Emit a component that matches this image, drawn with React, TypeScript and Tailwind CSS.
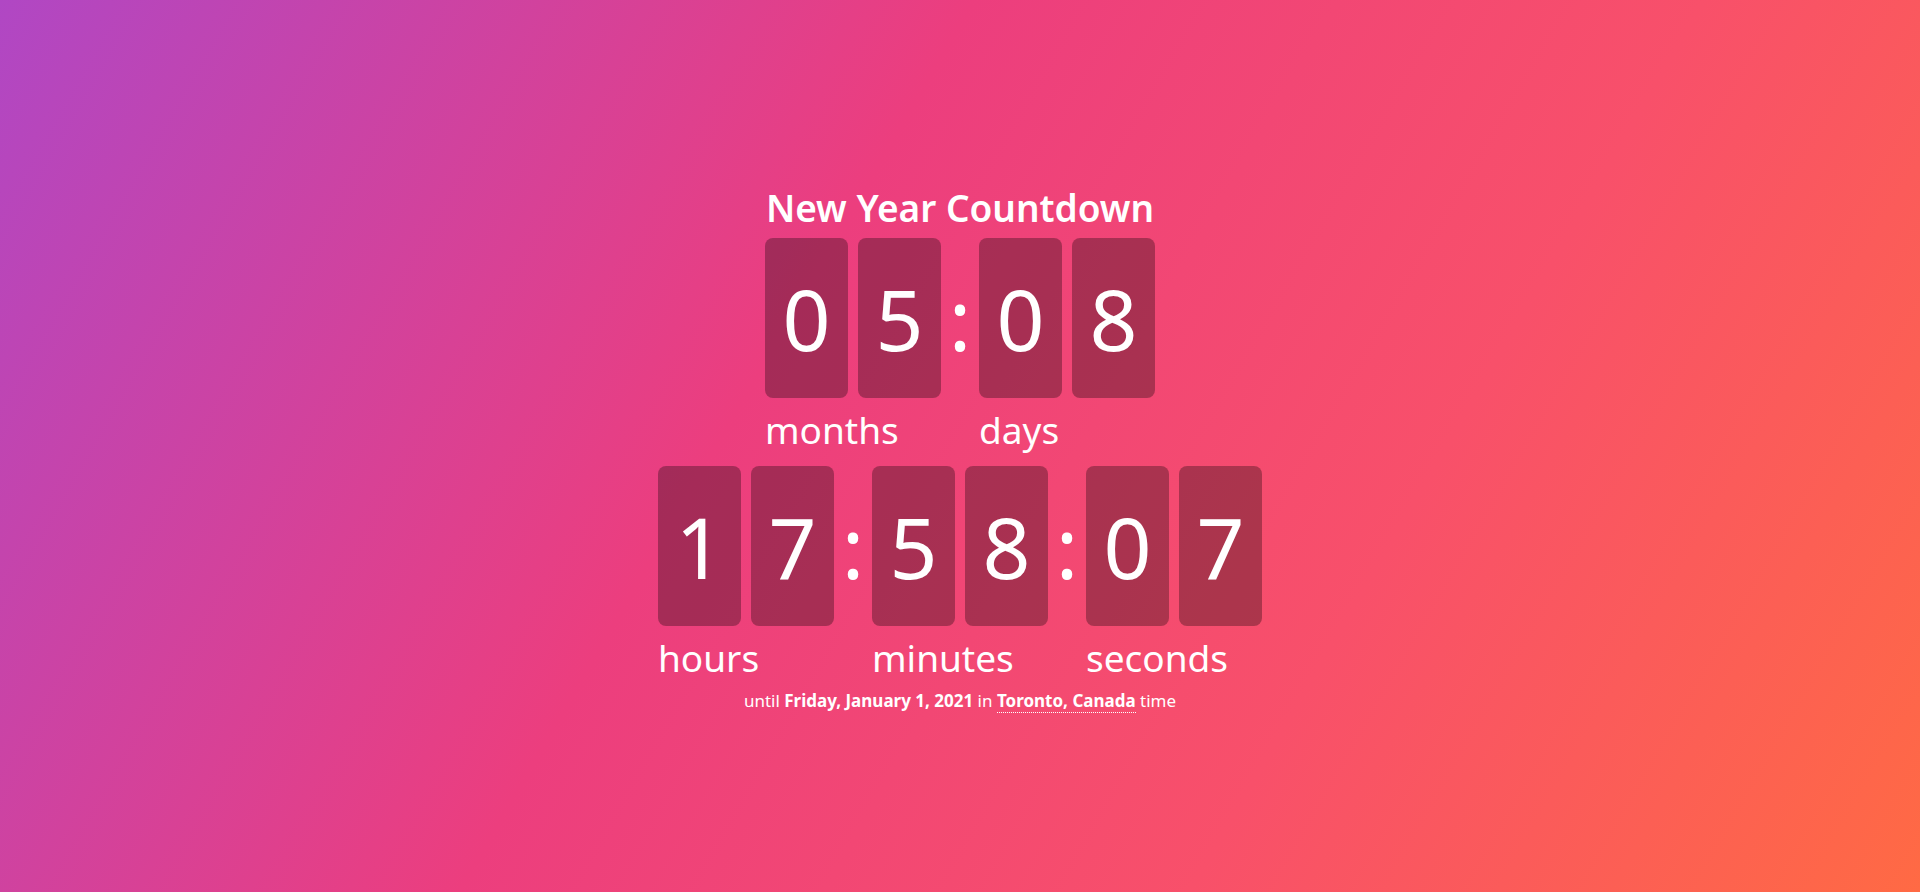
import React from "react";

type Unit = { digits: string; label: string };

const topRow: Unit[] = [
  { digits: "05", label: "months" },
  { digits: "08", label: "days" },
];

const bottomRow: Unit[] = [
  { digits: "17", label: "hours" },
  { digits: "58", label: "minutes" },
  { digits: "07", label: "seconds" },
];

const DigitBox: React.FC<{ value: string }> = ({ value }) => (
  <div className="w-[83px] h-[160px] bg-black/30 rounded-lg flex items-center justify-center text-[84px] text-white pt-[2px]">
    {value}
  </div>
);

const Colon: React.FC = () => (
  <div className="w-[38px] h-[160px] flex items-center justify-center text-[84px] text-white pt-[2px]">
    :
  </div>
);

const UnitBlock: React.FC<{ unit: Unit }> = ({ unit }) => (
  <div className="flex flex-col">
    <div className="flex gap-[10px]">
      {unit.digits.split("").map((d, i) => (
        <DigitBox key={i} value={d} />
      ))}
    </div>
    <div className="mt-[13px] text-[37px] leading-none text-white">
      {unit.label}
    </div>
  </div>
);

const Row: React.FC<{ units: Unit[] }> = ({ units }) => (
  <div className="flex items-start">
    {units.map((u, i) => (
      <React.Fragment key={u.label}>
        {i > 0 && <Colon />}
        <UnitBlock unit={u} />
      </React.Fragment>
    ))}
  </div>
);

const App: React.FC = () => {
  return (
    <div
      className="min-h-screen w-full flex flex-col items-center justify-center pt-[6px] bg-[linear-gradient(120deg,#b047c4_0%,#ec3e7e_40%,#f8506a_70%,#ff6a44_100%)] text-white"
      style={{ fontFamily: '"Noto Sans", "Open Sans", sans-serif' }}
    >
      <h1 className="text-[37px] leading-none font-semibold mb-3">
        New Year Countdown
      </h1>

      <Row units={topRow} />

      <div className="mt-[18px]">
        <Row units={bottomRow} />
      </div>

      <p className="mt-[16px] text-[17px] leading-none">
        until <span className="font-bold">Friday, January 1, 2021</span> in{" "}
        <span className="font-bold border-b border-dotted border-white">
          Toronto, Canada
        </span>{" "}
        time
      </p>
    </div>
  );
};

export default App;
